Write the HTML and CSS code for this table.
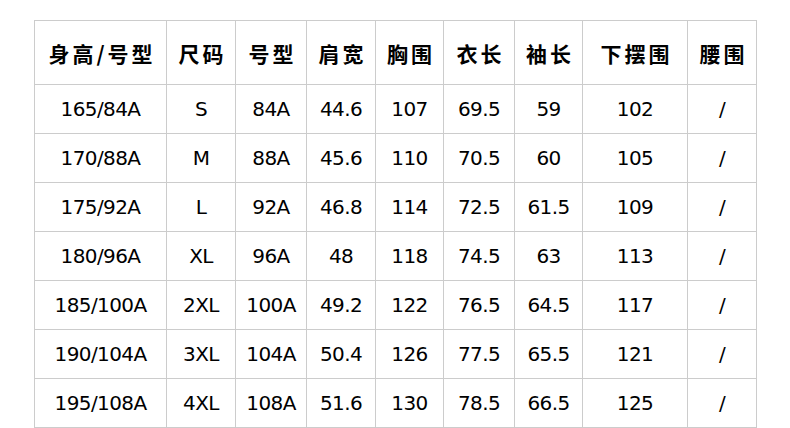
FILE: index.html
```html
<!DOCTYPE html>
<html lang="zh">
<head>
<meta charset="utf-8">
<link rel="stylesheet" href="styles.css">
</head>
<body>
<div class="page">
<table class="size-table">
<colgroup>
<col class="c1"><col class="c2"><col class="c3"><col class="c4"><col class="c5"><col class="c6"><col class="c7"><col class="c8"><col class="c9">
</colgroup>
<thead>
<tr><th>身高/号型</th><th>尺码</th><th>号型</th><th>肩宽</th><th>胸围</th><th>衣长</th><th>袖长</th><th>下摆围</th><th>腰围</th></tr>
</thead>
<tbody>
<tr><td>165/84A</td><td>S</td><td>84A</td><td>44.6</td><td>107</td><td>69.5</td><td>59</td><td>102</td><td>/</td></tr>
<tr><td>170/88A</td><td>M</td><td>88A</td><td>45.6</td><td>110</td><td>70.5</td><td>60</td><td>105</td><td>/</td></tr>
<tr><td>175/92A</td><td>L</td><td>92A</td><td>46.8</td><td>114</td><td>72.5</td><td>61.5</td><td>109</td><td>/</td></tr>
<tr><td>180/96A</td><td>XL</td><td>96A</td><td>48</td><td>118</td><td>74.5</td><td>63</td><td>113</td><td>/</td></tr>
<tr><td>185/100A</td><td>2XL</td><td>100A</td><td>49.2</td><td>122</td><td>76.5</td><td>64.5</td><td>117</td><td>/</td></tr>
<tr><td>190/104A</td><td>3XL</td><td>104A</td><td>50.4</td><td>126</td><td>77.5</td><td>65.5</td><td>121</td><td>/</td></tr>
<tr><td>195/108A</td><td>4XL</td><td>108A</td><td>51.6</td><td>130</td><td>78.5</td><td>66.5</td><td>125</td><td>/</td></tr>
</tbody>
</table>
</div>
</body>
</html>
```
FILE: styles.css
```css
html, body {
  margin: 0;
  padding: 0;
  background: #fff;
}
.page {
  padding: 20px 0 0 34px;
}
.size-table {
  border-collapse: collapse;
  table-layout: fixed;
  width: 722px;
  color: #000;
}
.c1 { width: 132px; }
.c2 { width: 69px; }
.c3 { width: 71px; }
.c4 { width: 69px; }
.c5 { width: 68px; }
.c6 { width: 71px; }
.c7 { width: 68px; }
.c8 { width: 105px; }
.c9 { width: 69px; }
.size-table th,
.size-table td {
  border: 1px solid #cccccc;
  text-align: center;
  padding: 0;
  white-space: nowrap;
}
.size-table th {
  height: 63px;
  font-family: "Noto Sans CJK SC", sans-serif;
  font-weight: bold;
  font-size: 21px;
  letter-spacing: 3px;
  text-indent: 3px;
}
.size-table td {
  height: 48px;
  font-family: "DejaVu Sans", sans-serif;
  font-size: 20px;
  font-weight: normal;
  letter-spacing: -0.6px;
}
```
